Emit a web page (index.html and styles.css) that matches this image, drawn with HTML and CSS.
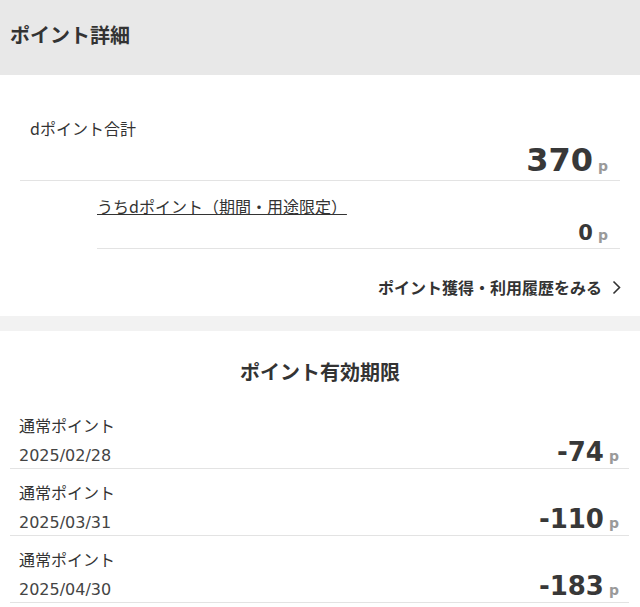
FILE: index.html
```html
<!DOCTYPE html>
<html lang="ja">
<head>
    <meta charset="UTF-8">
    <meta name="viewport" content="width=device-width, initial-scale=1.0">
    <title>ポイント詳細</title>
    <link rel="stylesheet" href="styles.css">
</head>
<body>
    <header class="page-header">
        <h1 class="page-title">ポイント詳細</h1>
    </header>

    <section class="summary">
        <div class="total">
            <div class="total-label">dポイント合計</div>
            <div class="total-value"><span class="num">370</span><span class="unit">p</span></div>
        </div>
        <div class="limited">
            <div class="limited-label"><a href="#">うちdポイント（期間・用途限定）</a></div>
            <div class="limited-value"><span class="num">0</span><span class="unit">p</span></div>
        </div>
        <div class="history">
            <a href="#" class="history-link">ポイント獲得・利用履歴をみる
                <svg class="chevron" width="9" height="15" viewBox="0 0 9 15"><polyline points="1.5,1.5 7.5,7.5 1.5,13.5" fill="none" stroke="#333" stroke-width="1.6"/></svg>
            </a>
        </div>
    </section>

    <section class="expire">
        <h2 class="expire-title">ポイント有効期限</h2>
        <div class="expire-row">
            <div class="expire-info">
                <div class="expire-kind">通常ポイント</div>
                <div class="expire-date">2025/02/28</div>
            </div>
            <div class="expire-value"><span class="num">-74</span><span class="unit">p</span></div>
        </div>
        <div class="expire-row">
            <div class="expire-info">
                <div class="expire-kind">通常ポイント</div>
                <div class="expire-date">2025/03/31</div>
            </div>
            <div class="expire-value"><span class="num">-110</span><span class="unit">p</span></div>
        </div>
        <div class="expire-row">
            <div class="expire-info">
                <div class="expire-kind">通常ポイント</div>
                <div class="expire-date">2025/04/30</div>
            </div>
            <div class="expire-value"><span class="num">-183</span><span class="unit">p</span></div>
        </div>
    </section>
</body>
</html>
```

FILE: styles.css
```css
body {
    margin: 0;
    padding: 0;
    background-color: #f2f2f2;
    color: #333;
    font-family: "Noto Sans CJK JP", "DejaVu Sans", sans-serif;
    font-size: 16px;
}

.page-header {
    height: 75px;
    background-color: #e8e8e8;
    display: flex;
    align-items: center;
    padding: 0 10px;
    box-sizing: border-box;
}

.page-title {
    margin: 0 0 5px;
    font-size: 20px;
    font-weight: bold;
    line-height: 28px;
    color: #333;
}

.summary {
    background-color: #fff;
    padding: 41px 0 17px;
    margin-bottom: 15px;
}

.num {
    font-family: "DejaVu Sans", sans-serif;
    font-weight: bold;
    color: #383838;
}

.unit {
    font-family: "DejaVu Sans", sans-serif;
    font-weight: bold;
    font-size: 14px;
    line-height: 16px;
    color: #9a9a9a;
    margin-left: 5px;
}

.total {
    margin: 0 20px;
    border-bottom: 1px solid #e3e3e3;
}

.total-label {
    padding-left: 10px;
    line-height: 24px;
    height: 24px;
}

.total-value {
    display: flex;
    justify-content: flex-end;
    align-items: baseline;
    height: 40px;
    padding-right: 12px;
}

.total-value .num {
    font-size: 32px;
    line-height: 40px;
}

.limited {
    margin: 0 20px 0 97px;
    padding-top: 13px;
    border-bottom: 1px solid #e3e3e3;
}

.limited-label {
    line-height: 24px;
    height: 24px;
}

.limited-label a {
    color: #333;
    text-decoration: underline;
}

.limited-value {
    display: flex;
    justify-content: flex-end;
    align-items: baseline;
    height: 30px;
    padding-right: 12px;
}

.limited-value .num {
    font-size: 21px;
    line-height: 30px;
}

.history {
    margin-top: 26px;
    padding-right: 19px;
    display: flex;
    justify-content: flex-end;
    height: 24px;
}

.history-link {
    color: #333;
    font-weight: bold;
    line-height: 24px;
    text-decoration: none;
    display: flex;
    align-items: center;
}

.chevron {
    margin-left: 10px;
}

.expire {
    background-color: #fff;
    padding-top: 27px;
    padding-bottom: 10px;
}

.expire-title {
    margin: 0 0 16px;
    text-align: center;
    font-size: 20px;
    font-weight: bold;
    line-height: 28px;
    height: 28px;
}

.expire-row {
    display: flex;
    justify-content: space-between;
    margin: 0 11px 0 10px;
    padding: 11px 10px 0 9px;
    border-bottom: 1px solid #e3e3e3;
}

.expire-kind {
    line-height: 24px;
    height: 24px;
}

.expire-date {
    margin-top: 7px;
    line-height: 24px;
    height: 24px;
    font-family: "DejaVu Sans", sans-serif;
    font-size: 16px;
    color: #444;
}

.expire-value {
    align-self: flex-end;
    display: flex;
    align-items: baseline;
    height: 32px;
}

.expire-value .num {
    font-size: 26px;
    line-height: 32px;
}
```
